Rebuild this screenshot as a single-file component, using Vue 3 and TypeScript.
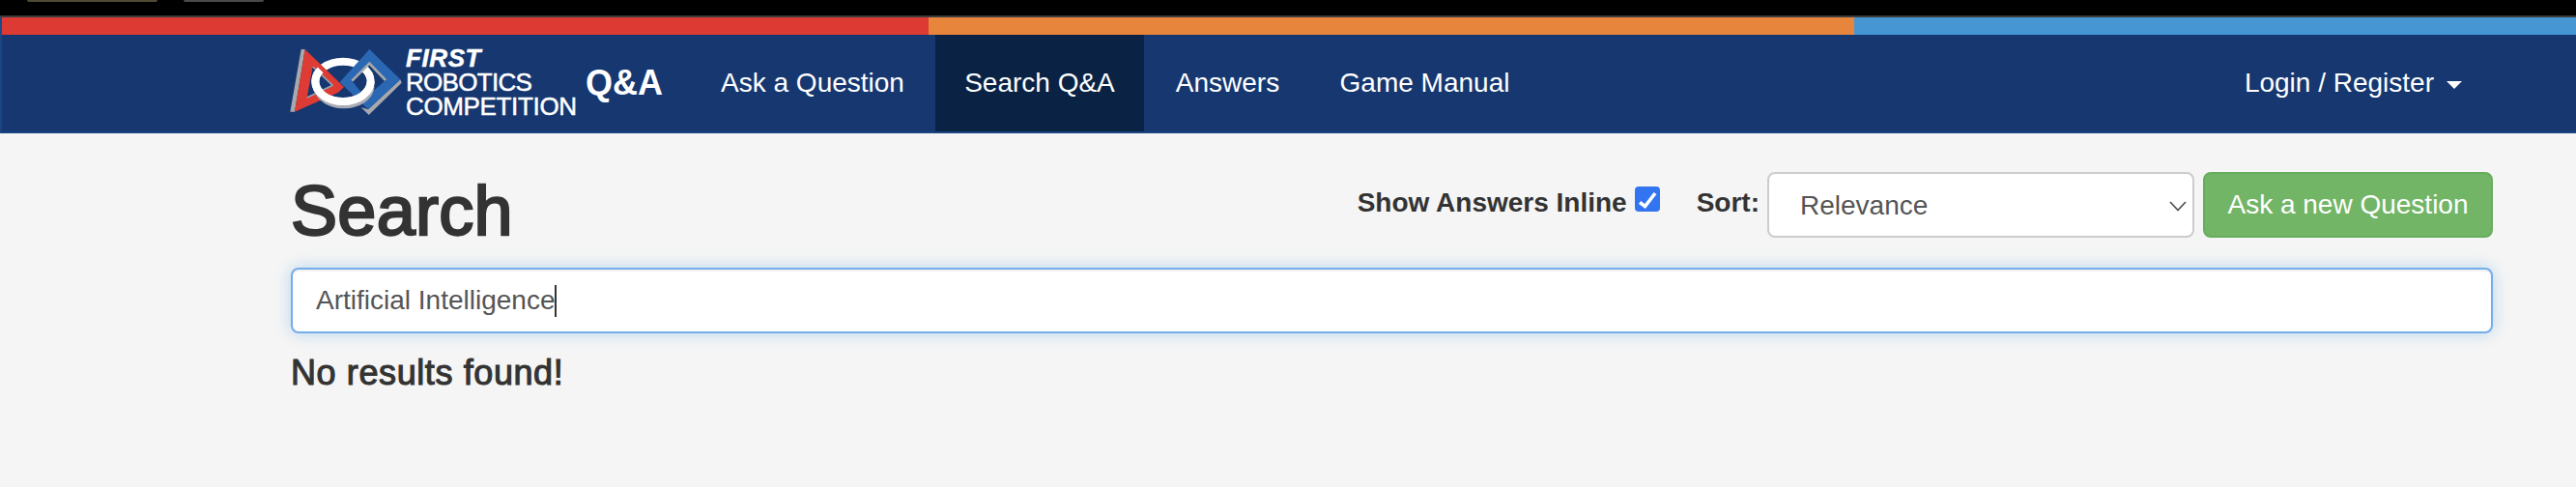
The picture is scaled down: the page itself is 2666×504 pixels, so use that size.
<script setup lang="ts">
const navItems: { label: string; width: number; active?: boolean }[] = [
  { label: 'Ask a Question', width: 254 },
  { label: 'Search Q&A', width: 216, active: true },
  { label: 'Answers', width: 173 },
  { label: 'Game Manual', width: 235 }
]
</script>

<template>
  <div class="page">
    <div class="chrome">
      <span class="tab tan"></span>
      <span class="tab grey"></span>
    </div>
    <div class="stripes">
      <span class="red"></span>
      <span class="orange"></span>
      <span class="blue"></span>
    </div>
    <nav class="navbar">
      <a class="brand">
        <svg class="mark" viewBox="0 0 390 240" width="130" height="80" aria-hidden="true">
          <ellipse cx="180" cy="118" rx="86" ry="62" fill="none" stroke="#fff" stroke-width="24" />
          <polygon points="50,18 62,18 30,212 16,212" fill="#a7a9ac" />
          <path d="M62 18 L183 135 L165 152 L30 212 Z M86 72 L68 168 L148 130 Z" fill="#dd3b33" fill-rule="evenodd" />
          <path d="M86 72 L148 130 M68 168 L148 130" fill="none" stroke="#9aa5b1" stroke-width="5" />
          <path d="M96 146 A90 66 0 0 0 180 196" fill="none" stroke="#a9adb3" stroke-width="12" />
          <path d="M180 180 A86 62 0 0 1 94 118 A86 62 0 0 1 110 82" fill="none" stroke="#fff" stroke-width="24" />
          <polygon points="358,112 362,122 260,222 236,198 258,205" fill="#a7a9ac" />
          <path d="M262 18 L358 112 L258 205 L170 120 Z M262 62 L208 116 L250 168 L312 114 Z" fill="#2b68b4" fill-rule="evenodd" />
          <path d="M208 116 L262 62 L312 114" fill="none" stroke="#a7a9ac" stroke-width="8" />
          <path d="M272 134 A90 66 0 0 1 180 196" fill="none" stroke="#a9adb3" stroke-width="12" />
          <path d="M266 118 A86 62 0 0 1 180 180" fill="none" stroke="#fff" stroke-width="24" />
        </svg>
        <span class="wordmark">
          <span class="first">FIRST</span>
          <span class="line">ROBOTICS</span>
          <span class="line tight">COMPETITION</span>
        </span>
        <span class="qa">Q&amp;A</span>
      </a>
      <ul class="links">
        <li
          v-for="item in navItems"
          :key="item.label"
          :class="{ active: item.active }"
          :style="{ width: item.width + 'px' }"
        >{{ item.label }}</li>
      </ul>
      <div class="login">Login / Register<span class="caret"></span></div>
    </nav>
    <main class="content">
      <div class="head">
        <h1>Search</h1>
        <div class="controls">
          <label class="inline">
            <span>Show Answers Inline</span>
            <svg class="check" width="26" height="26" viewBox="0 0 26 26" role="checkbox" aria-checked="true">
              <rect width="26" height="26" rx="4" fill="#3374f0" />
              <path d="M5 16.5 L10.5 20.5 L21 7" fill="none" stroke="#fff" stroke-width="3.6" />
            </svg>
          </label>
          <label class="sort">Sort:</label>
          <div class="select">
            <span>Relevance</span>
            <svg width="18" height="11" viewBox="0 0 18 11" aria-hidden="true"><path d="M1 1 L9 9.5 L17 1" fill="none" stroke="#555" stroke-width="1.8" /></svg>
          </div>
          <button class="ask">Ask a new Question</button>
        </div>
      </div>
      <div class="search"><span>Artificial Intelligence</span><i class="cursor"></i></div>
      <h4>No results found!</h4>
    </main>
  </div>
</template>

<style>
html, body { margin: 0; background: #f5f5f5; }
</style>

<style scoped>
.page {
  width: 2666px;
  height: 504px;
  overflow: hidden;
  background: #f5f5f5;
  font-family: "Liberation Sans", Arial, sans-serif;
  color: #333;
}
.chrome {
  height: 16px;
  background: #000;
  border-bottom: 2px solid #3c3c3c;
  display: flex;
  align-items: flex-start;
  padding-left: 28px;
  gap: 27px;
}
.tab { display: block; height: 2px; border-radius: 0 0 6px 6px; }
.tan { width: 135px; background: #4f4a33; }
.grey { width: 83px; background: #4a4a4c; }
.stripes { display: flex; height: 18px; padding-left: 2px; background: #1c4a8a; }
.stripes span { display: block; }
.red { width: 959px; background: #dc3a33; }
.orange { width: 958px; background: #e8853d; }
.blue { flex: 1; background: #4596d2; }
.navbar {
  height: 100px;
  display: flex;
  align-items: stretch;
  background: #163770;
  border-bottom: 2px solid #1b4582;
  border-left: 2px solid #1b4582;
  color: #fff;
  font-size: 28px;
  padding-left: 293px;
}
.brand { display: flex; align-items: flex-start; width: 419px; flex: none; }
.mark { margin-top: 9px; flex: none; margin-right: -5px; }
.wordmark { display: flex; flex-direction: column; margin-top: 12px; width: 187px; flex: none; color: #fff; }
.first { font: italic 700 26px/25px "Liberation Sans", Arial, sans-serif; letter-spacing: 0.6px; -webkit-text-stroke: 0.5px #fff; }
.line { font-size: 26px; line-height: 25px; -webkit-text-stroke: 0.5px #fff; letter-spacing: -0.7px; }
.tight { letter-spacing: -0.35px; }
.qa { font-weight: 700; font-size: 36px; line-height: 100px; margin-left: -1px; }
.links { display: flex; list-style: none; margin: 0; padding: 0; }
.links li { line-height: 100px; text-align: center; }
.links li.active { background: #0a2344; }
.login { margin-left: auto; margin-right: 118px; display: flex; align-items: center; line-height: 100px; white-space: nowrap; }
.caret {
  display: block;
  margin-left: 13px;
  margin-top: 3px;
  border-top: 8px solid #fff;
  border-left: 8px solid transparent;
  border-right: 8px solid transparent;
}
.content { padding: 40px 86px 0 301px; }
.head { display: flex; justify-content: space-between; align-items: flex-start; height: 99px; }
h1 { margin: 0; font-size: 72px; line-height: 80px; font-weight: 400; -webkit-text-stroke: 2.4px #333; letter-spacing: 0.3px; }
.controls { display: flex; align-items: flex-start; font-size: 28px; font-weight: 700; }
.inline { display: flex; align-items: flex-start; line-height: 40px; margin-top: 12px; gap: 8px; width: 312px; white-space: nowrap; }
.check { flex: none; margin-top: 3px; }
.sort { margin-left: 39px; margin-right: 8px; line-height: 40px; margin-top: 12px; }
.select {
  box-sizing: border-box;
  width: 442px;
  height: 68px;
  background: #fff;
  border: 2px solid #ccc;
  border-radius: 8px;
  display: flex;
  align-items: center;
  justify-content: space-between;
  padding: 2px 6px 0 32px;
  font-weight: 400;
  color: #555;
}
.ask {
  box-sizing: border-box;
  width: 300px;
  height: 68px;
  margin-left: 9px;
  background: #72b566;
  border: 2px solid #68ad5c;
  border-radius: 8px;
  color: #fff;
  font: 400 28px "Liberation Sans", Arial, sans-serif;
  padding: 0;
}
.search {
  box-sizing: border-box;
  height: 68px;
  background: #fff;
  border: 2px solid #75ade8;
  border-radius: 8px;
  box-shadow: 0 0 16px rgba(102, 175, 233, 0.45), inset 0 2px 2px rgba(0, 0, 0, 0.06);
  display: flex;
  align-items: center;
  padding-left: 24px;
  font-size: 28px;
  color: #555;
}
.cursor { display: block; width: 2px; height: 33px; background: #333; }
h4 { margin: 21px 0 0; font-size: 36px; line-height: 40px; font-weight: 400; -webkit-text-stroke: 1.1px #333; letter-spacing: 0.6px; }
</style>
